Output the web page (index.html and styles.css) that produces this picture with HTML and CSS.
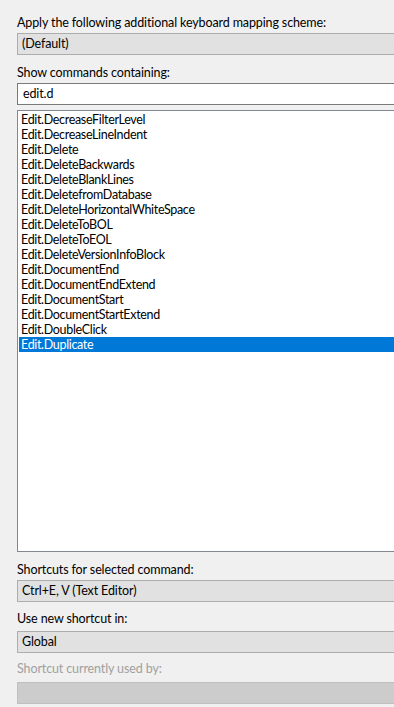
FILE: index.html
```html
<!DOCTYPE html>
<html>
<head>
<meta charset="utf-8">
<link rel="stylesheet" href="styles.css">
</head>
<body>
<div class="page">
  <div class="label l1">Apply the following additional keyboard mapping scheme:</div>
  <div class="combo">(Default)</div>

  <div class="label l2">Show commands containing:</div>
  <div class="textbox">edit.d</div>

  <ul class="list">
    <li>Edit.DecreaseFilterLevel</li>
    <li>Edit.DecreaseLineIndent</li>
    <li>Edit.Delete</li>
    <li>Edit.DeleteBackwards</li>
    <li>Edit.DeleteBlankLines</li>
    <li>Edit.DeletefromDatabase</li>
    <li>Edit.DeleteHorizontalWhiteSpace</li>
    <li>Edit.DeleteToBOL</li>
    <li>Edit.DeleteToEOL</li>
    <li>Edit.DeleteVersionInfoBlock</li>
    <li>Edit.DocumentEnd</li>
    <li>Edit.DocumentEndExtend</li>
    <li>Edit.DocumentStart</li>
    <li>Edit.DocumentStartExtend</li>
    <li>Edit.DoubleClick</li>
    <li class="selected">Edit.Duplicate</li>
  </ul>

  <div class="label l3">Shortcuts for selected command:</div>
  <div class="combo">Ctrl+E, V (Text Editor)</div>

  <div class="label l4">Use new shortcut in:</div>
  <div class="combo">Global</div>

  <div class="label l5 disabled">Shortcut currently used by:</div>
  <div class="combo combo-disabled"></div>
</div>
</body>
</html>
```

FILE: styles.css
```css
html, body {
  margin: 0;
  padding: 0;
  background: #f0f0f0;
  overflow: hidden;
}

.page {
  display: flex;
  flex-direction: column;
  padding: 15px 0 0 17px;
  width: 400px;
  font-family: Lato, "Noto Sans", sans-serif;
  font-size: 12.5px;
  letter-spacing: -0.12px;
  color: #000;
}

.label {
  line-height: 16px;
  height: 16px;
  margin-bottom: 2px;
  white-space: nowrap;
}

.l2 { margin-top: 10px; }
.l3 { margin-top: 10px; }
.l4 { margin-top: 9px; margin-bottom: 4px; }
.l5 { margin-top: 8px; margin-bottom: 5px; }

.disabled { color: #a0a0a0; }

.combo {
  box-sizing: border-box;
  height: 22px;
  background: #e1e1e1;
  border: 1px solid #adadad;
  padding-left: 4px;
  line-height: 20px;
  white-space: nowrap;
}

.combo-disabled {
  background: #cccccc;
  border-color: #bfbfbf;
}

.textbox {
  box-sizing: border-box;
  height: 22px;
  background: #ffffff;
  border: 1px solid #7a7a7a;
  padding-left: 5px;
  line-height: 20px;
}

.list {
  box-sizing: border-box;
  list-style: none;
  margin: 5px 0 0 0;
  padding: 1px;
  height: 442px;
  background: #ffffff;
  border: 1px solid #828790;
}

.list li {
  height: 15px;
  line-height: 15px;
  padding-left: 2px;
  white-space: nowrap;
  letter-spacing: -0.33px;
}

.list li.selected {
  background: #0078d7;
  color: #ffffff;
}
```
